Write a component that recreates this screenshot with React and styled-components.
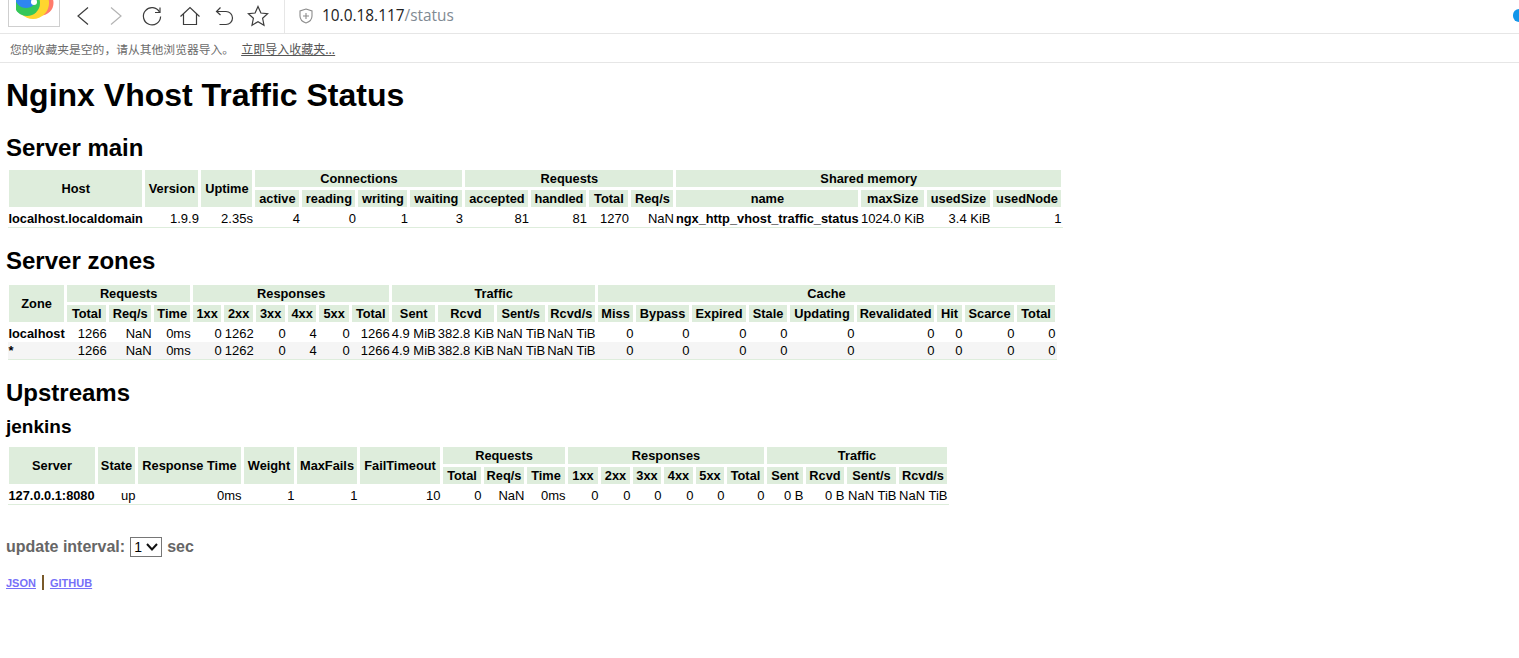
import React from "react";
import styled, { createGlobalStyle } from "styled-components";

const GlobalStyle = createGlobalStyle`
  html, body {
    margin: 0;
    padding: 0;
    background: #fff;
    overflow: hidden;
  }
  body {
    font-family: "Liberation Sans", Arial, sans-serif;
    font-size: 14px;
    color: #000;
  }
`;

const mainHead = [
  [
    { label: "Host", rowSpan: 2 },
    { label: "Version", rowSpan: 2 },
    { label: "Uptime", rowSpan: 2 },
    { label: "Connections", colSpan: 4 },
    { label: "Requests", colSpan: 4 },
    { label: "Shared memory", colSpan: 4 },
  ],
  ["active", "reading", "writing", "waiting", "accepted", "handled", "Total", "Req/s", "name", "maxSize", "usedSize", "usedNode"],
];
const mainRows = [
  ["localhost.localdomain", "1.9.9", "2.35s", 4, 0, 1, 3, 81, 81, 1270, "NaN", "ngx_http_vhost_traffic_status", "1024.0 KiB", "3.4 KiB", 1],
];
const mainCols = [134, 56, 54, 47, 56, 52, 55, 66, 58, 42, 45, 185, 63, 66, 71];

const zoneHead = [
  [
    { label: "Zone", rowSpan: 2 },
    { label: "Requests", colSpan: 3 },
    { label: "Responses", colSpan: 6 },
    { label: "Traffic", colSpan: 4 },
    { label: "Cache", colSpan: 9 },
  ],
  ["Total", "Req/s", "Time", "1xx", "2xx", "3xx", "4xx", "5xx", "Total", "Sent", "Rcvd", "Sent/s", "Rcvd/s", "Miss", "Bypass", "Expired", "Stale", "Updating", "Revalidated", "Hit", "Scarce", "Total"],
];
const zoneTail = [1266, "NaN", "0ms", 0, 1262, 0, 4, 0, 1266, "4.9 MiB", "382.8 KiB", "NaN TiB", "NaN TiB", 0, 0, 0, 0, 0, 0, 0, 0, 0];
const zoneRows = [
  ["localhost", ...zoneTail],
  ["*", ...zoneTail],
];
const zoneCols = [57, 42, 45, 39, 31, 32, 32, 31, 33, 40, 46, 57, 51, 50, 38, 56, 57, 41, 67, 80, 28, 52, 41];

const upstreamHead = [
  [
    { label: "Server", rowSpan: 2 },
    { label: "State", rowSpan: 2 },
    { label: "Response Time", rowSpan: 2 },
    { label: "Weight", rowSpan: 2 },
    { label: "MaxFails", rowSpan: 2 },
    { label: "FailTimeout", rowSpan: 2 },
    { label: "Requests", colSpan: 3 },
    { label: "Responses", colSpan: 6 },
    { label: "Traffic", colSpan: 4 },
  ],
  ["Total", "Req/s", "Time", "1xx", "2xx", "3xx", "4xx", "5xx", "Total", "Sent", "Rcvd", "Sent/s", "Rcvd/s"],
];
const upstreamRows = [
  ["127.0.0.1:8080", "up", "0ms", 1, 1, 10, 0, "NaN", "0ms", 0, 0, 0, 0, 0, 0, "0 B", "0 B", "NaN TiB", "NaN TiB"],
];
const upstreamCols = [89, 40, 106, 53, 63, 83, 41, 43, 41, 33, 32, 31, 32, 31, 40, 39, 41, 52, 51];

function StatusTable({ head, rows, cols }) {
  return (
    <Table>
      <colgroup>
        {cols.map((w, i) => (
          <Col key={i} $w={w} />
        ))}
      </colgroup>
      <thead>
        {head.map((cells, r) => (
          <tr key={r}>
            {cells.map((cell, c) =>
              typeof cell === "string" ? (
                <Th key={c}>{cell}</Th>
              ) : (
                <Th key={c} rowSpan={cell.rowSpan} colSpan={cell.colSpan}>
                  {cell.label}
                </Th>
              )
            )}
          </tr>
        ))}
      </thead>
      <tbody>
        {rows.map((row, r) => (
          <tr key={r}>
            {row.map((value, c) => (
              <Td key={c} $name={c === 0 || value === "ngx_http_vhost_traffic_status"}>
                {value}
              </Td>
            ))}
          </tr>
        ))}
      </tbody>
    </Table>
  );
}

function BrowserLogo() {
  return (
    <LogoBox>
      <svg width="42" height="26" viewBox="0 0 42 26">
        <circle cx="25" cy="3" r="12.5" fill="#ff7b6b" />
        <circle cx="17" cy="3" r="16" fill="#ffd62e" />
        <circle cx="11" cy="3" r="13" fill="#35c759" />
        <circle cx="10" cy="-3" r="11" fill="#2e86f0" />
        <circle cx="18" cy="2" r="3" fill="#fff" />
      </svg>
    </LogoBox>
  );
}

function NavIcon({ gap = 0, children }) {
  return (
    <IconSlot $gap={gap}>
      <svg width="22" height="22" viewBox="0 0 22 22" fill="none" stroke="currentColor" strokeWidth="1.2">
        {children}
      </svg>
    </IconSlot>
  );
}

export default function App() {
  return (
    <>
      <GlobalStyle />
      <Toolbar>
        <BrowserLogo />
        <NavGroup>
          <NavIcon>
            <path d="M16 2.5 L6 11 L16 19.5" />
          </NavIcon>
          <DisabledIcon>
            <NavIcon gap={11.5}>
              <path d="M6 2.5 L16 11 L6 19.5" />
            </NavIcon>
          </DisabledIcon>
          <NavIcon gap={14}>
            <path d="M18.5 7 A8.6 8.6 0 1 0 19.6 11.5" />
            <path d="M19 2.5 V7.5 H14" />
          </NavIcon>
          <NavIcon gap={16}>
            <path d="M1.5 11.5 L11 2.5 L20.5 11.5" />
            <path d="M4.5 9 V19.5 H17.5 V9" />
          </NavIcon>
          <NavIcon gap={12}>
            <path d="M7.5 2.5 L3.5 6.5 L7.5 10" />
            <path d="M3.5 6.5 H13 A6.5 6.5 0 0 1 13 19.5 H6.5" />
          </NavIcon>
          <NavIcon gap={12}>
            <path d="M11 1.5 L13.9 8 L20.6 8.7 L15.6 13.3 L17 20.2 L11 16.7 L5 20.2 L6.4 13.3 L1.4 8.7 L8.1 8 Z" />
          </NavIcon>
        </NavGroup>
        <AddressBar>
          <svg width="14" height="16" viewBox="0 0 14 16" fill="none" stroke="#8c8c8c" strokeWidth="1.1">
            <path d="M7 1 L13 3 V8 C13 11.5 10 14 7 15 C4 14 1 11.5 1 8 V3 Z" />
            <path d="M7 5 V11 M4 8 H10" />
          </svg>
          <UrlHost>
            10.0.18.117<UrlPath>/status</UrlPath>
          </UrlHost>
        </AddressBar>
        <EdgeBlob />
      </Toolbar>
      <BookmarkBar>
        <span>您的收藏夹是空的，请从其他浏览器导入。</span>
        <BookmarkLink>立即导入收藏夹...</BookmarkLink>
      </BookmarkBar>
      <Page>
        <Title>Nginx Vhost Traffic Status</Title>
        <Section>Server main</Section>
        <StatusTable head={mainHead} rows={mainRows} cols={mainCols} />
        <Section $after={7}>Server zones</Section>
        <StatusTable head={zoneHead} rows={zoneRows} cols={zoneCols} />
        <Section $after={9}>Upstreams</Section>
        <SubSection>jenkins</SubSection>
        <StatusTable head={upstreamHead} rows={upstreamRows} cols={upstreamCols} />
        <Interval>
          update interval:
          <IntervalSelect defaultValue="1">
            <option>1</option>
            <option>2</option>
            <option>5</option>
          </IntervalSelect>
          sec
        </Interval>
        <Links>
          <a href="#json">JSON</a>
          <Separator />
          <a href="#github">GITHUB</a>
        </Links>
      </Page>
    </>
  );
}

const Toolbar = styled.div`
  display: flex;
  align-items: flex-start;
  height: 33px;
  padding-left: 8px;
  border-bottom: 1px solid #e6e6e6;
  overflow: hidden;
`;

const LogoBox = styled.div`
  box-sizing: border-box;
  width: 52px;
  height: 27px;
  padding-left: 7px;
  border: 1px solid #cfcfcf;
  border-top: 0;
  flex-shrink: 0;
  overflow: hidden;
`;

const NavGroup = styled.div`
  box-sizing: border-box;
  display: flex;
  align-items: center;
  height: 33px;
  padding: 0 15px 2px 11.5px;
  color: #3c3c3c;
  border-right: 1px solid #e6e6e6;
`;

const IconSlot = styled.span`
  display: flex;
  width: 22px;
  height: 22px;
  margin-left: ${(p) => p.$gap}px;
`;

const DisabledIcon = styled.span`
  display: flex;
  color: #b4b4b4;
`;

const AddressBar = styled.div`
  display: flex;
  align-items: center;
  gap: 9px;
  height: 31px;
  padding-left: 14px;
`;

const UrlHost = styled.span`
  font-family: "Open Sans", "Noto Sans", sans-serif;
  font-size: 15.4px;
  color: #222;
`;

const UrlPath = styled.span`
  color: #7f8a93;
`;

const EdgeBlob = styled.div`
  margin-left: auto;
  margin-top: 9px;
  width: 6px;
  height: 13px;
  background: #1296ea;
  border-radius: 6px 0 0 6px;
`;

const BookmarkBar = styled.div`
  display: flex;
  align-items: center;
  gap: 7px;
  height: 28px;
  padding-left: 10px;
  border-bottom: 1px solid #e6e6e6;
  font-family: "Noto Sans CJK SC", sans-serif;
  font-size: 11.8px;
  color: #6b6b6b;
`;

const BookmarkLink = styled.span`
  font-size: 12px;
  color: #555;
  text-decoration: underline;
`;

const Page = styled.main`
  padding: 14px 0 0 6px;
`;

const Title = styled.h1`
  margin: 0 0 20px;
  font-size: 32px;
  line-height: 37px;
`;

const Section = styled.h2`
  margin: 0 0 ${(p) => p.$after ?? 5}px;
  font-size: 24px;
  line-height: 28px;
`;

const SubSection = styled.h3`
  margin: 0 0 6px;
  font-size: 19px;
  line-height: 22px;
`;

const Table = styled.table`
  border-collapse: collapse;
  margin: 0 0 19px 0;
  font-size: 13px;

  tbody tr:nth-child(even) {
    background: #f5f5f5;
  }
  tbody tr:last-child {
    border-bottom: 1px solid #deeddc;
  }
`;

const Col = styled.col`
  width: ${(p) => p.$w}px;
`;

const Th = styled.th`
  padding: 0;
  height: 17px;
  background: #deeddc;
  border: 3px solid #fff;
  font-size: 12.8px;
  font-weight: bold;
  text-align: center;
  white-space: nowrap;
`;

const Td = styled.td`
  padding: 0 1px;
  height: 17px;
  font-size: ${(p) => (p.$name ? "12.8px" : "13px")};
  font-weight: ${(p) => (p.$name ? "bold" : "normal")};
  text-align: ${(p) => (p.$name ? "left" : "right")};
  white-space: nowrap;
`;

const Interval = styled.div`
  display: flex;
  align-items: center;
  gap: 5px;
  margin-top: 32px;
  font-size: 16px;
  font-weight: bold;
  color: #666;
`;

const IntervalSelect = styled.select`
  appearance: none;
  box-sizing: border-box;
  width: 32px;
  height: 20px;
  padding: 0 0 0 3px;
  font-family: "Liberation Sans", Arial, sans-serif;
  font-size: 14px;
  color: #000;
  border: 1px solid #767676;
  background: #fff
    url("data:image/svg+xml,%3Csvg xmlns='http://www.w3.org/2000/svg' width='12' height='8'%3E%3Cpath d='M1 1 L6 6.5 L11 1' fill='none' stroke='%23111' stroke-width='2'/%3E%3C/svg%3E")
    no-repeat right 3px center;
`;

const Links = styled.div`
  display: flex;
  align-items: center;
  gap: 6px;
  margin-top: 18px;
  font-size: 11px;
  font-weight: bold;

  a {
    color: #7670f8;
  }
`;

const Separator = styled.span`
  width: 2px;
  height: 15px;
  background: #7a5a2a;
`;
